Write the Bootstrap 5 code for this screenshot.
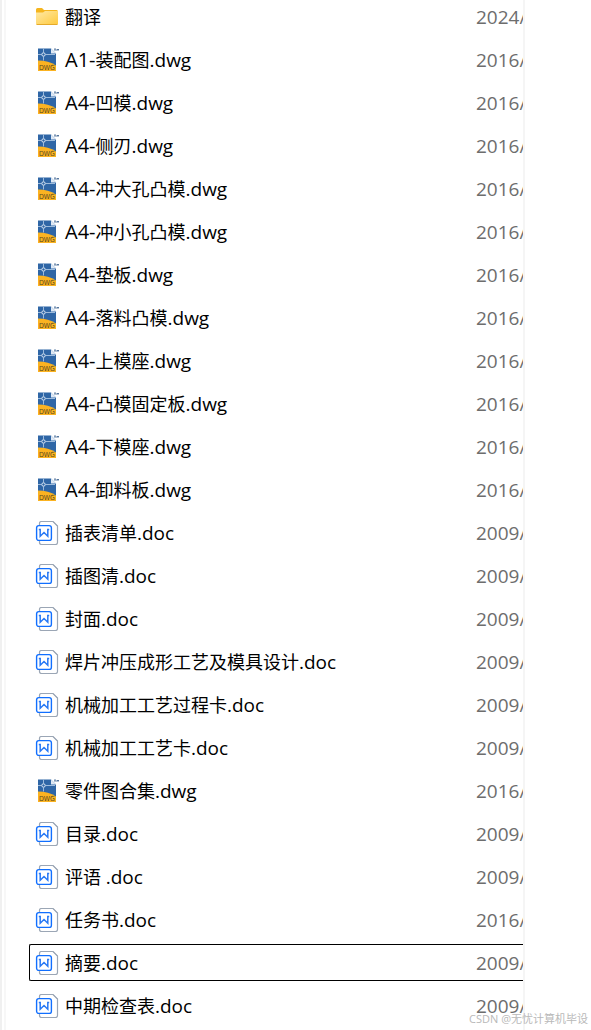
<!DOCTYPE html>
<html lang="zh-CN">
<head>
<meta charset="utf-8">
<meta name="viewport" content="width=device-width, initial-scale=1">
<title>文件列表</title>
<link href="https://cdn.jsdelivr.net/npm/bootstrap@5.3.0/dist/css/bootstrap.min.css" rel="stylesheet">
<style>
  body { font-family: "Open Sans", "Noto Sans CJK SC", sans-serif; background: #fff; color: #000; }
  .explorer { min-height: 100vh; padding-right: 66px; }
  .scroll-edge { width: 6px; border-left: 2px solid #f0f0f0; border-right: 2px solid #f7f7f7; }
  .file-pane { border-right: 2px solid #f5f5f5; padding-left: 23px; min-width: 0; }
  .file-table { table-layout: fixed; border-collapse: separate; border-spacing: 0 6px; margin-top: -8px; width: 100%; }
  .file-table td { height: 37px; padding: 0; border: 1px solid transparent; border-width: 1px 0; white-space: nowrap; overflow: hidden; line-height: 24px; vertical-align: middle; }
  .file-table td:first-child { border-left-width: 1px; padding-left: 5px; font-size: 18px; }
  .file-table td:last-child { width: 47px; color: #6d6d6d; font-size: 19px; }
  .file-table .focused td { border-color: #000; }
  .file-table .focused td:first-child { border-radius: 2px 0 0 2px; }
  .file-name { gap: 6px; }
  .file-name svg { width: 24px; height: 24px; flex: none; }
  .pre { font-size: 20px; }
  .ext { font-size: 19px; }
  .watermark { right: 3px; bottom: 2px; font-size: 11px; line-height: 18px; color: #b9b9b9; }
</style>
</head>
<body>
<svg width="0" height="0" class="position-absolute" aria-hidden="true">
  <defs>
    <linearGradient id="fold" x1="0" y1="0" x2="1" y2="1"><stop offset="0" stop-color="#ffe9a6"/><stop offset="1" stop-color="#ffca3e"/></linearGradient>
    <symbol id="folder" viewBox="0 0 24 24">
      <path d="M1 4.500q0-1.500 1.500-1.500H7l2 2h12.500q1.500 0 1.500 1.500V11H1z" fill="#f5b51e"/>
      <path d="M1 7.500h7l2-1.500h13v12.500q0 1-1 1H2q-1 0-1-1z" fill="url(#fold)"/>
      <path d="M1.500 19.500h21" stroke="#e5aa2b"/>
    </symbol>
    <symbol id="dwg" viewBox="0 0 24 24">
      <path d="M3 .5h13l5 5V23H3z" fill="#2f66a6"/>
      <path d="M3 12.500c7 0 13 1.500 18 5v5.500H3z" fill="#fbb321"/>
      <path d="M16 .5v5h5z" fill="#dfe9f5"/>
      <path d="M8.500 .5v4M8.500 8.500v4M3 6.500h3.500M10.500 6.500H20" stroke="#9dbbdc" fill="none"/>
      <circle cx="8.500" cy="6.500" r="1.700" stroke="#e3edf8" fill="#2f66a6"/>
      <path d="M19 1h2M20 1v2M22 3V1l1 1 1-1v2" stroke="#3f6592" stroke-width=".8" fill="none"/>
      <text x="4" y="22" font-size="7" font-family="Liberation Sans Narrow, DejaVu Sans Condensed, sans-serif" fill="#5d4b1f">DWG</text>
    </symbol>
    <symbol id="doc" viewBox="0 0 24 24">
      <path d="M4.500 4V2.500q0-2 2-2H18L22.500 5v16.500q0 2-2 2h-14q-2 0-2-2V20" fill="#fff" stroke="#9ba6b5" stroke-width="1.200"/>
      <path d="M18 .5 22.500 5" stroke="#9ba6b5" fill="none"/>
      <rect x="1.600" y="4.600" width="14.800" height="14.800" rx="2.200" fill="#fff" stroke="#116fff" stroke-width="1.400"/>
      <path d="M3.800 8.500h1.400v6.700L9 11.500l3.800 3.700V8.500h1.400" fill="none" stroke="#2879f5" stroke-width="1.500"/>
    </symbol>
  </defs>
</svg>
<main class="explorer d-flex position-relative overflow-hidden">
  <div class="scroll-edge flex-shrink-0"></div>
  <div class="file-pane flex-grow-1">
    <table class="file-table" aria-label="文件列表">
      <tbody>
        <tr><td><div class="file-name d-flex align-items-center"><svg><use href="#folder"/></svg><span>翻译</span></div></td><td>2024/</td></tr>
        <tr><td><div class="file-name d-flex align-items-center"><svg><use href="#dwg"/></svg><span><span class="pre">A1-</span>装配图<span class="ext">.dwg</span></span></div></td><td>2016/</td></tr>
        <tr><td><div class="file-name d-flex align-items-center"><svg><use href="#dwg"/></svg><span><span class="pre">A4-</span>凹模<span class="ext">.dwg</span></span></div></td><td>2016/</td></tr>
        <tr><td><div class="file-name d-flex align-items-center"><svg><use href="#dwg"/></svg><span><span class="pre">A4-</span>侧刃<span class="ext">.dwg</span></span></div></td><td>2016/</td></tr>
        <tr><td><div class="file-name d-flex align-items-center"><svg><use href="#dwg"/></svg><span><span class="pre">A4-</span>冲大孔凸模<span class="ext">.dwg</span></span></div></td><td>2016/</td></tr>
        <tr><td><div class="file-name d-flex align-items-center"><svg><use href="#dwg"/></svg><span><span class="pre">A4-</span>冲小孔凸模<span class="ext">.dwg</span></span></div></td><td>2016/</td></tr>
        <tr><td><div class="file-name d-flex align-items-center"><svg><use href="#dwg"/></svg><span><span class="pre">A4-</span>垫板<span class="ext">.dwg</span></span></div></td><td>2016/</td></tr>
        <tr><td><div class="file-name d-flex align-items-center"><svg><use href="#dwg"/></svg><span><span class="pre">A4-</span>落料凸模<span class="ext">.dwg</span></span></div></td><td>2016/</td></tr>
        <tr><td><div class="file-name d-flex align-items-center"><svg><use href="#dwg"/></svg><span><span class="pre">A4-</span>上模座<span class="ext">.dwg</span></span></div></td><td>2016/</td></tr>
        <tr><td><div class="file-name d-flex align-items-center"><svg><use href="#dwg"/></svg><span><span class="pre">A4-</span>凸模固定板<span class="ext">.dwg</span></span></div></td><td>2016/</td></tr>
        <tr><td><div class="file-name d-flex align-items-center"><svg><use href="#dwg"/></svg><span><span class="pre">A4-</span>下模座<span class="ext">.dwg</span></span></div></td><td>2016/</td></tr>
        <tr><td><div class="file-name d-flex align-items-center"><svg><use href="#dwg"/></svg><span><span class="pre">A4-</span>卸料板<span class="ext">.dwg</span></span></div></td><td>2016/</td></tr>
        <tr><td><div class="file-name d-flex align-items-center"><svg><use href="#doc"/></svg><span>插表清单<span class="ext">.doc</span></span></div></td><td>2009/</td></tr>
        <tr><td><div class="file-name d-flex align-items-center"><svg><use href="#doc"/></svg><span>插图清<span class="ext">.doc</span></span></div></td><td>2009/</td></tr>
        <tr><td><div class="file-name d-flex align-items-center"><svg><use href="#doc"/></svg><span>封面<span class="ext">.doc</span></span></div></td><td>2009/</td></tr>
        <tr><td><div class="file-name d-flex align-items-center"><svg><use href="#doc"/></svg><span>焊片冲压成形工艺及模具设计<span class="ext">.doc</span></span></div></td><td>2009/</td></tr>
        <tr><td><div class="file-name d-flex align-items-center"><svg><use href="#doc"/></svg><span>机械加工工艺过程卡<span class="ext">.doc</span></span></div></td><td>2009/</td></tr>
        <tr><td><div class="file-name d-flex align-items-center"><svg><use href="#doc"/></svg><span>机械加工工艺卡<span class="ext">.doc</span></span></div></td><td>2009/</td></tr>
        <tr><td><div class="file-name d-flex align-items-center"><svg><use href="#dwg"/></svg><span>零件图合集<span class="ext">.dwg</span></span></div></td><td>2016/</td></tr>
        <tr><td><div class="file-name d-flex align-items-center"><svg><use href="#doc"/></svg><span>目录<span class="ext">.doc</span></span></div></td><td>2009/</td></tr>
        <tr><td><div class="file-name d-flex align-items-center"><svg><use href="#doc"/></svg><span>评语 <span class="ext">.doc</span></span></div></td><td>2009/</td></tr>
        <tr><td><div class="file-name d-flex align-items-center"><svg><use href="#doc"/></svg><span>任务书<span class="ext">.doc</span></span></div></td><td>2016/</td></tr>
        <tr class="focused"><td><div class="file-name d-flex align-items-center"><svg><use href="#doc"/></svg><span>摘要<span class="ext">.doc</span></span></div></td><td>2009/</td></tr>
        <tr><td><div class="file-name d-flex align-items-center"><svg><use href="#doc"/></svg><span>中期检查表<span class="ext">.doc</span></span></div></td><td>2009/</td></tr>
      </tbody>
    </table>
  </div>
  <div class="watermark position-absolute">CSDN @无忧计算机毕设</div>
</main>
<script src="https://cdn.jsdelivr.net/npm/bootstrap@5.3.0/dist/js/bootstrap.bundle.min.js"></script>
</body>
</html>
